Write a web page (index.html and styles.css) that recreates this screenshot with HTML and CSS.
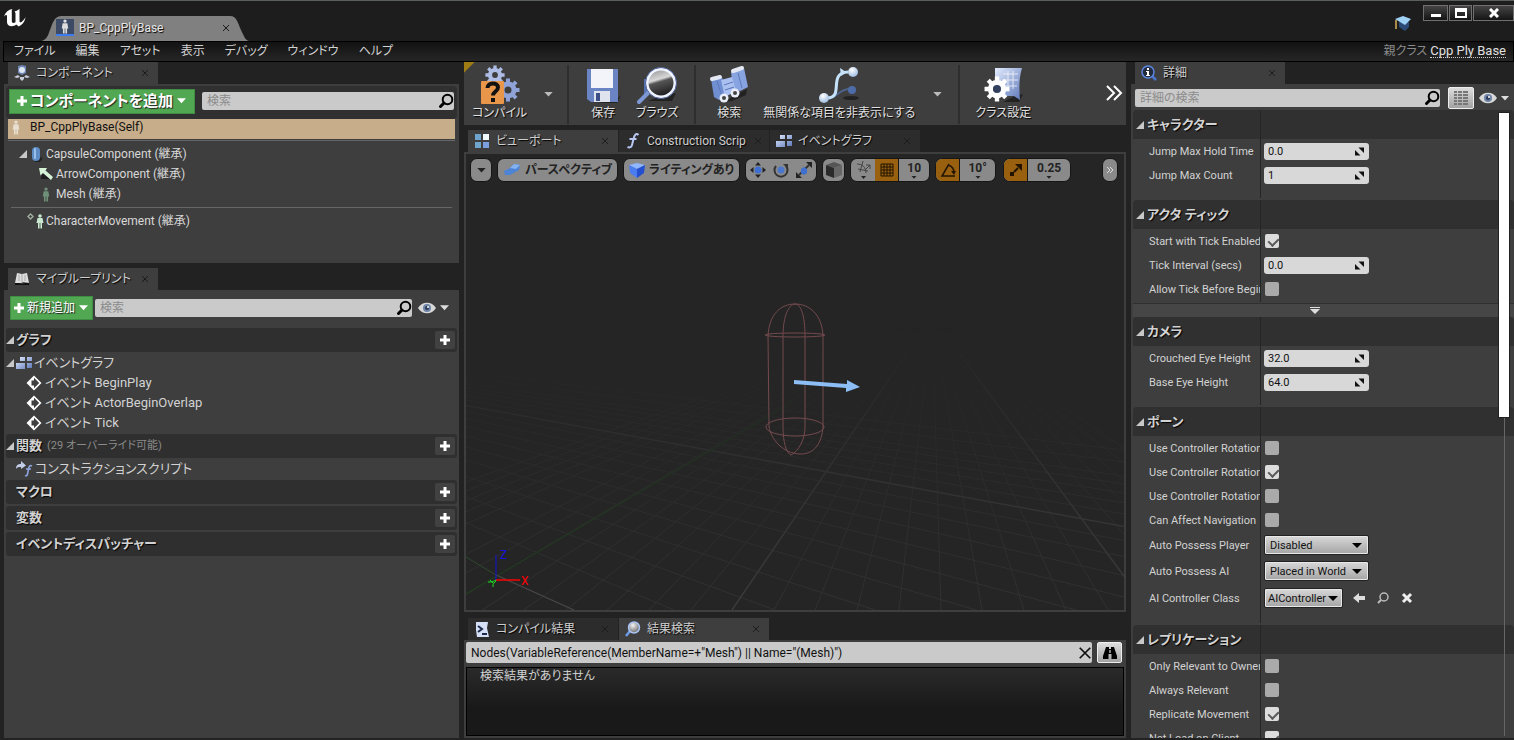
FILE: index.html
```html
<!DOCTYPE html>
<html lang="ja">
  <head>
    <meta charset="UTF-8" />
    <meta name="viewport" content="width=device-width, initial-scale=1.0" />
    <title>BP_CppPlyBase</title>
    <link rel="stylesheet" href="styles.css">
  </head>
  <body>
    <!-- shared icons -->
    <svg class="defs" width="0" height="0" aria-hidden="true">
      <defs>
        <linearGradient id="steel" x1="0" y1="0" x2="1" y2="1">
          <stop offset="0" stop-color="#e4edff" />
          <stop offset="1" stop-color="#5b76b8" />
        </linearGradient>
        <radialGradient id="ball" cx="0.4" cy="0.3" r="0.8">
          <stop offset="0" stop-color="#ffffff" />
          <stop offset="1" stop-color="#8fb4dc" />
        </radialGradient>
        <linearGradient id="lens" x1="0" y1="0" x2="0.3" y2="1">
          <stop offset="0" stop-color="#8a8a8a" />
          <stop offset="0.45" stop-color="#d8d8d8" />
          <stop offset="0.55" stop-color="#555" />
          <stop offset="1" stop-color="#222" />
        </linearGradient>
        <radialGradient id="glass" cx="0.4" cy="0.3" r="0.8">
          <stop offset="0" stop-color="#f4f4f4" />
          <stop offset="1" stop-color="#555" />
        </radialGradient>
        <symbol id="i-search" viewBox="0 0 16 16">
          <circle cx="9.500" cy="6.500" r="4.800" fill="none" stroke="#000" stroke-width="2" />
          <path d="M6 10L2.500 13.500" stroke="#000" stroke-width="3" stroke-linecap="round" />
        </symbol>
        <symbol id="i-plus" viewBox="0 0 12 12">
          <path d="M4.500 1h3v3.500H11v3H7.500V11h-3V7.500H1v-3h3.500z" fill="#fff" />
        </symbol>
        <symbol id="i-down" viewBox="0 0 10 6">
          <path d="M0 0h10L5 5.500z" fill="currentColor" />
        </symbol>
        <symbol id="i-tri" viewBox="0 0 8 8">
          <path d="M8 0v8H0z" fill="#c8c8c8" />
        </symbol>
        <symbol id="i-x" viewBox="0 0 8 8">
          <path d="M1 1l6 6M7 1L1 7" stroke="currentColor" fill="none" />
        </symbol>
        <symbol id="i-eye" viewBox="0 0 18 12">
          <path d="M0 6C4-1 14-1 18 6 14 13 4 13 0 6z" fill="#d8d8d8" />
          <circle cx="9" cy="6" r="4" fill="#6d83a8" />
          <circle cx="9" cy="6" r="2" fill="#2c3a55" />
          <circle cx="10" cy="5" r="1" fill="#fff" />
        </symbol>
        <symbol id="i-graph" viewBox="0 0 16 14">
          <path d="M4 1h5v4H4zM11 1h5v4h-5zM0 7h9v6H0zM11 7h5v5h-5z" fill="url(#steel)" />
        </symbol>
        <symbol id="i-event" viewBox="0 0 16 16">
          <path d="M8 0.500L15.500 8 8 15.500 0.500 8z" fill="#fff" />
          <path d="M8 2.800L13.200 8 8 13.200V10.500H5.500V5.500H8z" fill="#3e3e3e" />
        </symbol>
        <symbol id="i-spin" viewBox="0 0 9 9">
          <path d="M3.500 0.500H9V6zM0 3v5.500h5.500z" fill="#111" />
        </symbol>
        <symbol id="i-man" viewBox="0 0 8 16">
          <circle cx="4" cy="2.200" r="1.800" fill="currentColor" />
          <path d="M1.500 4.500h5l1 5.500H6.200V15.500H4.400V10h-.8v5.500H1.800V10H0.500z" fill="currentColor" />
        </symbol>
        <symbol id="i-gear" viewBox="0 0 24 24">
          <circle cx="12" cy="12" r="6" fill="none" stroke="currentColor" stroke-width="5" />
          <path d="M12 0.500v5M12 18.500v5M0.500 12h5M18.500 12h5M3.900 3.900l3.500 3.500M16.600 16.600l3.500 3.500M20.100 3.900l-3.500 3.500M7.400 16.600l-3.500 3.500" stroke="currentColor" stroke-width="4" />
        </symbol>
      </defs>
    </svg>

    <header class="titlebar">
      <svg class="logo" viewBox="0 0 22 20">
        <path d="M0 8.500C1.500 4 4.500 1.500 8.500 1 7.500 2 7.800 3 7.800 4.500V13c0 2 1.500 2.600 3.700 1.200V5L10.500 3.500C12.500 3 14 2.200 15.500 0.800V13c0 1.800 1.600 2 3 0 1.300-1 2.200-2.200 3-4-0.500 5-3.500 7.500-6.700 9.500l-2.600-2c-2.200 2.200-9 3-9.200-2.300V8C2.800 6.200 1.200 7 0 8.500z" fill="#fff" />
      </svg>
      <div class="doc-tab">
        <svg class="doc-shape" viewBox="0 0 208 25" preserveAspectRatio="none">
          <path d="M0 25C6 24 7 19 9 14S13 0 20 0h169c7 0 8 8 11 14s4 10 8 11z" fill="#808080" />
        </svg>
        <span class="doc-icon"><svg width="8" height="15"><use href="#i-man" /></svg></span>
        <span class="doc-name">BP_CppPlyBase</span>
        <button class="close" aria-label="閉じる"><svg width="8" height="8"><use href="#i-x" /></svg></button>
      </div>
      <svg class="cap" viewBox="0 0 18 18">
        <path d="M5 8v5l6 4 4-4V8z" fill="#2c4a78" />
        <path d="M1 5l8-3 8 3-6 6z" fill="#9fd0f5" />
        <path d="M2 6v9" stroke="#d9b25a" stroke-width="1.500" />
      </svg>
      <div class="win-buttons">
        <button aria-label="最小化"><svg width="10" height="10"><path d="M0 6h10v3H0z" fill="#fff" /></svg></button>
        <button class="win-max" aria-label="最大化"><svg width="12" height="10"><path d="M1 1h10v8H1z" fill="none" stroke="#fff" stroke-width="2" /><path d="M0 1h12v3H0z" fill="#fff" /></svg></button>
        <button class="win-close" aria-label="終了"><svg width="10" height="10"><path d="M1 1l8 8M9 1L1 9" stroke="#fff" stroke-width="3" /></svg></button>
      </div>
    </header>

    <nav class="menubar">
      <button>ファイル</button>
      <button>編集</button>
      <button>アセット</button>
      <button>表示</button>
      <button>デバッグ</button>
      <button>ウィンドウ</button>
      <button>ヘルプ</button>
      <p class="parent">親クラス <a href="#">Cpp Ply Base</a></p>
    </nav>

    <main class="workspace">
      <div class="left">
        <section class="dock components">
          <div class="tabs">
            <div class="tab active">
              <svg width="16" height="16" viewBox="0 0 16 16"><path d="M4 1l4-1 4 1v7l-4 2-4-2z" fill="#6f87b5" /><circle cx="8" cy="5" r="3" fill="#dfe6f4" /><path d="M0 12l4-2 2 2-3 1zM16 12l-4-2-2 2 3 1zM6 12h4v2l-2 2-2-2z" fill="#c6ccd8" /></svg>
              <span>コンポーネント</span>
              <button class="close" aria-label="閉じる"><svg width="8" height="8"><use href="#i-x" /></svg></button>
            </div>
          </div>
          <div class="panel">
            <div class="comp-bar">
              <button class="green big"><svg width="12" height="12"><use href="#i-plus" /></svg>コンポーネントを追加<svg width="9" height="6"><use href="#i-down" /></svg></button>
              <label class="search"><input type="text" placeholder="検索" aria-label="検索" /><svg width="16" height="16"><use href="#i-search" /></svg></label>
            </div>
            <ul class="tree">
              <li class="selected"><svg class="pawn" width="8" height="15"><use href="#i-man" /></svg>BP_CppPlyBase(Self)</li>
              <li class="rule"></li>
              <li class="lv1"><svg class="tri" width="8" height="8"><use href="#i-tri" /></svg><svg width="16" height="16" viewBox="0 0 16 16"><path d="M5 14l8-3v3l-3 2H6z" fill="#222" /><rect x="3" y="1" width="8" height="14" rx="4" fill="#5d8dc4" /><rect x="5" y="2" width="2" height="11" rx="1" fill="#98c0e8" /></svg>CapsuleComponent (継承)</li>
              <li class="lv2"><svg width="16" height="16" viewBox="0 0 16 16"><path d="M3 13h9L4 7z" fill="#1d1d1d" /><path d="M1 2h8L7.500 4.500 15 11l-2 3L5 7 2.500 9.500z" fill="#d6f3d8" /></svg>ArrowComponent (継承)</li>
              <li class="lv2 mesh"><svg width="16" height="15"><use href="#i-man" /></svg>Mesh (継承)</li>
              <li class="rule wide"></li>
              <li class="move"><svg width="18" height="16" viewBox="0 0 18 16"><path d="M3.500 1l2.500 2.500L3.500 6 1 3.500z" fill="none" stroke="#9fae9f" stroke-width="1.400" /><circle cx="13" cy="3" r="1.800" fill="#c9e6cf" /><path d="M10.500 5h5l1 5h-1.500v5.500h-1.600V10h-.8v5.500H11V10H9.500z" fill="#c9e6cf" /></svg>CharacterMovement (継承)</li>
            </ul>
          </div>
        </section>

        <section class="dock blueprint">
          <div class="tabs">
            <div class="tab active">
              <svg width="16" height="14" viewBox="0 0 16 14"><path d="M1 10l7 2 7-2v3H1z" fill="#111" /><path d="M3 1l5 1 5-1 2 10-6-1-2 1-6 0z" fill="#ddd" /><path d="M8 2v9M5 3v6M11 3v6" stroke="#aaa" /></svg>
              <span>マイブループリント</span>
              <button class="close" aria-label="閉じる"><svg width="8" height="8"><use href="#i-x" /></svg></button>
            </div>
          </div>
          <div class="panel">
            <div class="bp-bar">
              <button class="green"><svg width="12" height="12"><use href="#i-plus" /></svg>新規追加<svg width="9" height="6"><use href="#i-down" /></svg></button>
              <label class="search"><input type="text" placeholder="検索" aria-label="検索" /><svg width="16" height="16"><use href="#i-search" /></svg></label>
              <button class="view" aria-label="表示オプション"><svg width="18" height="12"><use href="#i-eye" /></svg><svg width="9" height="6"><use href="#i-down" /></svg></button>
            </div>
            <div class="category"><svg class="tri" width="8" height="8"><use href="#i-tri" /></svg><h2>グラフ</h2><button class="add" aria-label="追加"><svg width="12" height="12"><use href="#i-plus" /></svg></button></div>
            <ul class="members">
              <li class="graph"><svg class="tri" width="8" height="8"><use href="#i-tri" /></svg><svg width="16" height="14"><use href="#i-graph" /></svg>イベントグラフ</li>
              <li class="event"><svg width="16" height="16"><use href="#i-event" /></svg>イベント BeginPlay</li>
              <li class="event"><svg width="16" height="16"><use href="#i-event" /></svg>イベント ActorBeginOverlap</li>
              <li class="event"><svg width="16" height="16"><use href="#i-event" /></svg>イベント Tick</li>
            </ul>
            <div class="category"><svg class="tri" width="8" height="8"><use href="#i-tri" /></svg><h2>関数</h2><span class="hint">(29 オーバーライド可能)</span><button class="add" aria-label="追加"><svg width="12" height="12"><use href="#i-plus" /></svg></button></div>
            <ul class="members">
              <li class="func"><svg width="17" height="16" viewBox="0 0 17 16"><path d="M0 8C0 4 2 3 5 3V0l5 4.500L5 8V6C3 6 1 6 0 8z" fill="#c3cdea" /><path d="M16 5c-2-1-3 0-3.500 3l-1 5c-.4 2-1.500 2-2.500 1.500M10 8h5" fill="none" stroke="#8fa5e0" stroke-width="1.600" /></svg>コンストラクションスクリプト</li>
            </ul>
            <div class="category closed"><h2>マクロ</h2><button class="add" aria-label="追加"><svg width="12" height="12"><use href="#i-plus" /></svg></button></div>
            <div class="category closed"><h2>変数</h2><button class="add" aria-label="追加"><svg width="12" height="12"><use href="#i-plus" /></svg></button></div>
            <div class="category closed"><h2>イベントディスパッチャー</h2><button class="add" aria-label="追加"><svg width="12" height="12"><use href="#i-plus" /></svg></button></div>
          </div>
        </section>
      </div>

      <div class="center">
        <div class="toolbar">
          <div class="group first">
            <button class="tool">
              <svg width="40" height="40" viewBox="0 0 40 40">
                <g color="#aebde6"><use href="#i-gear" x="5" y="0" width="20" height="20" /></g>
                <g color="#8fa3d8"><use href="#i-gear" x="16" y="13" width="24" height="24" /></g>
                <rect x="1" y="16" width="23" height="23" rx="1" fill="#e8964a" />
                <path d="M7.500 23c0-6 10.500-6 10.500-.5 0 4-5 4-5 8" fill="none" stroke="#111" stroke-width="4" />
                <path d="M11 33h4v4h-4z" fill="#111" />
              </svg>
              コンパイル
            </button>
            <button class="more" aria-label="コンパイルオプション"><svg width="9" height="5"><use href="#i-down" /></svg></button>
          </div>
          <div class="group second">
            <button class="tool">
              <svg width="36" height="40" viewBox="0 0 36 40">
                <path d="M30 36l6-6-4 8H10z" fill="#222" />
                <path d="M2 4h31v33H6l-4-3z" fill="#6b84c4" />
                <path d="M6 4h22v19H6z" fill="#f2f4fa" />
                <path d="M9 26h16v11H9z" fill="#dfe3ee" />
                <path d="M11 28h4v8h-4z" fill="#3d4f86" />
              </svg>
              保存
            </button>
            <button class="tool">
              <svg width="42" height="40" viewBox="0 0 42 40">
                <path d="M12 36h24l4-8-12 2z" fill="#222" />
                <path d="M8 14h8v14l-8 2z" fill="#5570b0" />
                <path d="M14 26L3 37" stroke="#7d97d6" stroke-width="4" stroke-linecap="round" />
                <circle cx="25" cy="18" r="14" fill="url(#lens)" stroke="#f0f4ff" stroke-width="3" />
                <circle cx="25" cy="18" r="15.500" fill="none" stroke="#4b5f96" />
              </svg>
              ブラウズ
            </button>
          </div>
          <div class="group third">
            <button class="tool">
              <svg width="40" height="40" viewBox="0 0 40 40">
                <path d="M14 37l24-13-1 6-14 6z" fill="#222" />
                <path d="M2 14l11-2 6 18-9 5-5-3z" fill="#6f8fd2" />
                <path d="M22 7l13-4 4 19-8 4-7-3z" fill="#88a4e0" />
                <path d="M12 15l11-3 4 14-11 6z" fill="#a9c0f0" />
                <path d="M3 14l8-2M24 6l9-3" stroke="#e4e8f2" stroke-width="4" stroke-linecap="round" />
                <path d="M15 20l9-3M16 25l9-3M8 16l5 15M29 8l4 15" stroke="#5d78ba" />
                <circle cx="15" cy="33" r="4.500" fill="#e8edf8" /><circle cx="15" cy="33" r="2" fill="#444" />
                <circle cx="26" cy="28" r="4.500" fill="#e8edf8" /><circle cx="26" cy="28" r="2" fill="#444" />
              </svg>
              検索
            </button>
            <button class="tool">
              <svg width="42" height="40" viewBox="0 0 42 40">
                <ellipse cx="33" cy="33" rx="8" ry="2" fill="#222" />
                <path d="M6 32c14 4 12-8 26-8" fill="none" stroke="#4c6288" stroke-width="2" />
                <circle cx="34" cy="25" r="4" fill="#4e6ca8" />
                <path d="M9 33c18 0 0-25 21-26" fill="none" stroke="#c4e2fa" stroke-width="3" />
                <path d="M22 3l6 4-5 4z" fill="#c4e2fa" />
                <circle cx="35" cy="7" r="5" fill="url(#ball)" />
                <circle cx="6" cy="33" r="5" fill="url(#ball)" />
              </svg>
              無関係な項目を非表示にする
            </button>
            <button class="more" aria-label="非表示オプション"><svg width="9" height="5"><use href="#i-down" /></svg></button>
          </div>
          <div class="group fourth">
            <button class="tool">
              <svg width="40" height="40" viewBox="0 0 40 40">
                <path d="M20 37h16l4-8-8 2z" fill="#222" />
                <path d="M12 3h27c-3 10-3 20-2 32l-6-4H12z" fill="url(#steel)" />
                <path d="M20 9h15M20 15h15M20 21h14M25 6v18M30 6v18" stroke="#fff" opacity="0.700" />
                <g color="#fff"><use href="#i-gear" x="1" y="11" width="26" height="26" /></g>
                <circle cx="14" cy="24" r="4" fill="#33415f" />
              </svg>
              クラス設定
            </button>
          </div>
          <button class="overflow" aria-label="その他"><svg width="17" height="16" viewBox="0 0 17 16"><path d="M1 1l7 7-7 7M8 1l7 7-7 7" fill="none" stroke="#fff" stroke-width="2" /></svg></button>
        </div>

        <section class="dock view-dock">
          <div class="tabs">
            <div class="tab active">
              <svg width="16" height="14" viewBox="0 0 14 14"><path d="M0 0h6v6H0zM0 8h6v6H0z" fill="#6fa5cc" /><path d="M8 0h6v6H8z" fill="#f2fbff" /><path d="M8 8h6v6H8z" fill="#7c9fe0" /></svg>
              <span>ビューポート</span>
              <button class="close" aria-label="閉じる"><svg width="8" height="8"><use href="#i-x" /></svg></button>
            </div>
            <div class="tab">
              <svg width="16" height="16" viewBox="0 0 13 16"><path d="M12 2c-2-2-4-1-5 4L5.500 12c-.5 2-2 3-4.500 2M3 6h7" fill="none" stroke="#b8c6f2" stroke-width="2" /></svg>
              <span>Construction Scrip</span>
              <button class="close" aria-label="閉じる"><svg width="8" height="8"><use href="#i-x" /></svg></button>
            </div>
            <div class="tab">
              <svg width="16" height="14"><use href="#i-graph" /></svg>
              <span>イベントグラフ</span>
              <button class="close" aria-label="閉じる"><svg width="8" height="8"><use href="#i-x" /></svg></button>
            </div>
          </div>
          <div class="viewport">
            <svg class="scene" viewBox="0 0 659 456" preserveAspectRatio="xMinYMax slice">
              <defs>
                <linearGradient id="fade" x1="0" y1="0" x2="0" y2="1">
                  <stop offset="0.380" stop-color="#000" />
                  <stop offset="1" stop-color="#fff" />
                </linearGradient>
                <mask id="far" maskUnits="userSpaceOnUse" x="0" y="0" width="659" height="456"><rect width="659" height="456" fill="url(#fade)" /></mask>
              </defs>
              <g mask="url(#far)" fill="none" stroke="#323232">
                <path d="M466 162L-360 456M466 162L-318 456M466 162L-276 456M466 162L-234 456M466 162L-193 456M466 162L-109 456M466 162L-67 456M466 162L-26 456M466 162L16 456M466 162L58 456M466 162L100 456M466 162L141 456M466 162L183 456M466 162L225 456M466 162L308 456M466 162L349 456M466 162L391 456M466 162L433 456M466 162L475 456M466 162L516 456M466 162L558 456M466 162L600 456M466 162L642 456M466 162L725 456M466 162L767 456M466 162L808 456M466 162L850 456M466 162L892 456" />
                <path d="M-498 160L208 456M-498 160L309 456M-498 160L409 456M-498 160L510 456M-498 160L610 456M-498 160L711 456M-498 160L811 456M-498 160L912 456M-498 160L1012 456M-498 160L1213 456M-498 160L1314 456M-498 160L1414 456M-498 160L1515 456M-498 160L1615 456M-498 160L1816 456M-498 160L2016 456" />
                <path d="M466 162L266 456M466 162L683 456M-498 160L1113 456" stroke="#3c3c3c" stroke-width="1.500" />
                <path d="M0 440L327 248" stroke="#20401f" stroke-width="1.200" />
              </g>
              <path d="M0 403L30 421" stroke="#2d4a2e" />
              <path d="M30 421L108 456" stroke="#484848" stroke-width="1.200" />
              <g fill="none" stroke="#744a4e">
                <path d="M302 182C303 160 315 150 329 150s27 10 28 32v36L357 273M302 182l1 91" />
                <path d="M317 182c0-20 6-32 12-32s10 12 10 32v91c0 12-6 24-14 28-5-2-8-14-8-28z" />
                <path d="M303 273c2 12 14 27 32 27 14 0 21-12 22-27" />
                <ellipse cx="329" cy="181" rx="30" ry="2" />
                <ellipse cx="329" cy="273" rx="29" ry="9" />
              </g>
              <path d="M328 226l53 4v-4l13 7-14 5v-4l-52-4z" fill="#8cbef5" />
              <path d="M30 427v-26" stroke="#1414d8" />
              <path d="M30 426h24" stroke="#f00" stroke-width="1.500" />
              <path d="M22 428h4l4-2M24 426l4 4M30 427l-3 3v3" stroke="#1ee01e" fill="none" />
              <text x="34" y="405" fill="#1414d8">Z</text>
              <text x="55" y="431" fill="#f00">X</text>
            </svg>
            <div class="view-tools">
              <button class="pill arrow" aria-label="ビューポートオプション"><svg width="9" height="5"><use href="#i-down" /></svg></button>
              <button class="pill named"><svg width="18" height="14" viewBox="0 0 18 14"><path d="M1 8l6-3 4-4 6 1-1 5-9 5-5 0z" fill="#4d84d6" /><path d="M7 5l4-4 6 1-4 4z" fill="#84b2f0" /></svg>パースペクティブ</button>
              <button class="pill named"><svg width="16" height="16" viewBox="0 0 16 16"><path d="M0 3l8-2 8 2-8 4z" fill="#8fb6ff" /><path d="M0 3l8 4v9l-7-5z" fill="#4b7cf0" /><path d="M16 3L8 7v9l7-5z" fill="#2450cf" /></svg>ライティングあり</button>
              <div class="pill-group transform">
                <button class="seg" aria-label="移動"><svg width="16" height="16" viewBox="0 0 16 16"><circle cx="8" cy="8" r="3.500" fill="#3f6fd0" /><path d="M8 0l3 3.500H5zM8 16l3-3.500H5zM0 8l3.500-3v6zM16 8l-3.500-3v6z" fill="#222" /></svg></button>
                <button class="seg" aria-label="回転"><svg width="16" height="16" viewBox="0 0 16 16"><circle cx="8" cy="8" r="3.500" fill="#4a76cc" /><path d="M3 4a6.500 6.500 0 1 0 10 0" fill="none" stroke="#333" stroke-width="2" /><path d="M10 2h5v5z" fill="#333" /></svg></button>
                <button class="seg" aria-label="拡大縮小"><svg width="16" height="16" viewBox="0 0 16 16"><path d="M3 13L13 3" stroke="#333" stroke-width="2" /><path d="M5 7l3-2 3 2v4l-3 2-3-2z" fill="#3f6fd0" /><path d="M10 0h6v6zM0 10v6h6z" fill="#222" /></svg></button>
              </div>
              <button class="pill cube" aria-label="座標系"><svg width="16" height="16" viewBox="0 0 16 16"><path d="M0 3l8-3 8 3-8 3z" fill="#555" /><path d="M0 3l8 3v10l-8-3z" fill="#2a2a2a" /><path d="M16 3L8 6v10l8-3z" fill="#666" /></svg></button>
              <div class="pill-group">
                <button class="seg" aria-label="サーフェススナップ"><svg width="15" height="18" viewBox="0 0 15 18"><path d="M1 3c5 0 9 3 9 9M7 0L4 11M2 8l10 2M10 4h4v4M14 4l-5 5" fill="none" stroke="#444" /><path d="M5 15h5l-2.500 3z" fill="#222" /></svg></button>
                <button class="seg on" aria-label="グリッドスナップ"><svg width="14" height="14" viewBox="0 0 14 14"><path d="M1 1h12v12H1zM4 1v12M7 1v12M10 1v12M1 4h12M1 7h12M1 10h12" fill="none" stroke="#221400" /></svg></button>
                <button class="seg num">10<svg width="6" height="3"><use href="#i-down" /></svg></button>
              </div>
              <div class="pill-group">
                <button class="seg on" aria-label="角度スナップ"><svg width="16" height="14" viewBox="0 0 16 14"><path d="M9 1L2 13h13M8 2c4 1 6 4 6 8" fill="none" stroke="#221400" stroke-width="1.500" /><path d="M11 8h5l-2 4z" fill="#221400" /></svg></button>
                <button class="seg num deg">10°<svg width="6" height="3"><use href="#i-down" /></svg></button>
              </div>
              <div class="pill-group scale-snap">
                <button class="seg on" aria-label="スケールスナップ"><svg width="12" height="12" viewBox="0 0 12 12"><path d="M5 0h7v7zM0 8h4v4H0z" fill="#221400" /><path d="M4 8l4-4" stroke="#221400" stroke-width="2" /></svg></button>
                <button class="seg num scale">0.25<svg width="6" height="3"><use href="#i-down" /></svg></button>
              </div>
              <button class="pill end" aria-label="その他"><svg width="8" height="8" viewBox="0 0 8 8"><path d="M1 1l3 3-3 3M4 1l3 3-3 3" fill="none" stroke="#ddd" /></svg></button>
            </div>
          </div>
        </section>

        <section class="dock results">
          <div class="tabs">
            <div class="tab">
              <svg width="16" height="15" viewBox="0 0 14 15"><path d="M1 0h12l-1 6 2 9H2L1 8z" fill="#d5e0f6" /><path d="M3 4l4 3-4 3M7 12h5" fill="none" stroke="#1c2a4a" stroke-width="2" /></svg>
              <span>コンパイル結果</span>
              <button class="close" aria-label="閉じる"><svg width="8" height="8"><use href="#i-x" /></svg></button>
            </div>
            <div class="tab active">
              <svg width="16" height="16" viewBox="0 0 16 16"><path d="M5 10l-4 5" stroke="#6f9be6" stroke-width="2.500" /><circle cx="9" cy="6.500" r="5.500" fill="url(#glass)" stroke="#a9c4f4" stroke-width="1.500" /></svg>
              <span>結果検索</span>
              <button class="close" aria-label="閉じる"><svg width="8" height="8"><use href="#i-x" /></svg></button>
            </div>
          </div>
          <div class="panel">
            <div class="find-bar">
              <label class="search tall"><input type="text" value="Nodes(VariableReference(MemberName=+&quot;Mesh&quot;) || Name=&quot;(Mesh)&quot;)" aria-label="結果検索" /><svg width="14" height="14" viewBox="0 0 8 8"><path d="M1 1l6 6M7 1L1 7" stroke="#111" /></svg></label>
              <button class="light" aria-label="検索"><svg width="14" height="14" viewBox="0 0 14 14"><path d="M3 1h3v2h2V1h3l3 9v3H8.500V8h-3v5H0v-3z" fill="#000" /><path d="M6 4v3h2V4z" fill="#888" /></svg></button>
            </div>
            <div class="find-list"><p>検索結果がありません</p></div>
          </div>
        </section>
      </div>

      <section class="dock details">
        <div class="tabs">
          <div class="tab active">
            <svg width="16" height="16" viewBox="0 0 16 16"><path d="M11 11l4 4" stroke="#4b74d0" stroke-width="2.500" /><circle cx="7" cy="7" r="6" fill="#222a3c" stroke="#5b86e0" stroke-width="1.500" /><path d="M6 3h2v2H6zM5 6h3v4h1v1H5v-1h1V7H5z" fill="#fff" /></svg>
            <span>詳細</span>
            <button class="close" aria-label="閉じる"><svg width="8" height="8"><use href="#i-x" /></svg></button>
          </div>
        </div>
        <div class="panel">
          <div class="detail-bar">
            <label class="search"><input type="text" placeholder="詳細の検索" aria-label="詳細の検索" /><svg width="16" height="16"><use href="#i-search" /></svg></label>
            <button class="light matrix" aria-label="プロパティマトリックス"><svg width="14" height="14" viewBox="0 0 14 14"><path d="M0 1h3M4 1h4M9 1h5M0 4h3M4 4h4M9 4h5M0 7h3M4 7h4M9 7h5M0 10h3M4 10h4M9 10h5M0 13h3M4 13h4M9 13h5" stroke="#777" stroke-width="2" /></svg></button>
            <button class="view" aria-label="表示オプション"><svg width="18" height="12"><use href="#i-eye" /></svg><svg width="8" height="5"><use href="#i-down" /></svg></button>
          </div>
          <div class="props">
            <div class="prop-group">
              <h3><svg width="8" height="8"><use href="#i-tri" /></svg>キャラクター</h3>
              <div class="prop"><label for="hold">Jump Max Hold Time</label><span class="spin"><input id="hold" type="text" value="0.0" /><svg width="9" height="9"><use href="#i-spin" /></svg></span></div>
              <div class="prop"><label for="count">Jump Max Count</label><span class="spin"><input id="count" type="text" value="1" /><svg width="9" height="9"><use href="#i-spin" /></svg></span></div>
            </div>
            <div class="prop-group expandable">
              <h3><svg width="8" height="8"><use href="#i-tri" /></svg>アクタ ティック</h3>
              <div class="prop"><label for="tick">Start with Tick Enabled</label><input id="tick" type="checkbox" checked /></div>
              <div class="prop"><label for="interval">Tick Interval (secs)</label><span class="spin"><input id="interval" type="text" value="0.0" /><svg width="9" height="9"><use href="#i-spin" /></svg></span></div>
              <div class="prop"><label for="before">Allow Tick Before Begin</label><input id="before" type="checkbox" /></div>
            </div>
            <button class="expand" aria-label="詳細を表示"><svg width="10" height="8" viewBox="0 0 10 8"><path d="M0 0h10v1H0zM0 2h10L5 7z" fill="#ddd" /></svg></button>
            <div class="prop-group">
              <h3><svg width="8" height="8"><use href="#i-tri" /></svg>カメラ</h3>
              <div class="prop"><label for="crouch">Crouched Eye Height</label><span class="spin"><input id="crouch" type="text" value="32.0" /><svg width="9" height="9"><use href="#i-spin" /></svg></span></div>
              <div class="prop"><label for="base">Base Eye Height</label><span class="spin"><input id="base" type="text" value="64.0" /><svg width="9" height="9"><use href="#i-spin" /></svg></span></div>
            </div>
            <div class="prop-group">
              <h3><svg width="8" height="8"><use href="#i-tri" /></svg>ポーン</h3>
              <div class="prop"><label for="pitch">Use Controller Rotation</label><input id="pitch" type="checkbox" /></div>
              <div class="prop"><label for="yaw">Use Controller Rotation</label><input id="yaw" type="checkbox" checked /></div>
              <div class="prop"><label for="roll">Use Controller Rotation</label><input id="roll" type="checkbox" /></div>
              <div class="prop"><label for="nav">Can Affect Navigation</label><input id="nav" type="checkbox" /></div>
              <div class="prop mid"><label for="player">Auto Possess Player</label><span class="combo"><select id="player"><option>Disabled</option></select></span></div>
              <div class="prop mid"><label for="ai">Auto Possess AI</label><span class="combo"><select id="ai"><option>Placed in World</option></select></span></div>
              <div class="prop tall"><label for="aic">AI Controller Class</label><span class="combo short"><select id="aic"><option>AIController</option></select></span>
                <button class="mini" aria-label="使用"><svg width="12" height="12" viewBox="0 0 12 12"><path d="M0 6l6-5v3h6v4H6v3z" fill="#ddd" /></svg></button>
                <button class="mini" aria-label="参照"><svg width="12" height="12" viewBox="0 0 12 12"><circle cx="7" cy="5" r="4" fill="none" stroke="#bbb" stroke-width="1.500" /><path d="M4 8l-3 3" stroke="#bbb" stroke-width="2" /></svg></button>
                <button class="mini" aria-label="クリア"><svg width="12" height="12" viewBox="0 0 12 12"><path d="M2 2l8 8M10 2l-8 8" stroke="#eee" stroke-width="3" /></svg></button>
              </div>
            </div>
            <div class="prop-group">
              <h3><svg width="8" height="8"><use href="#i-tri" /></svg>レプリケーション</h3>
              <div class="prop"><label for="owner">Only Relevant to Owner</label><input id="owner" type="checkbox" /></div>
              <div class="prop"><label for="always">Always Relevant</label><input id="always" type="checkbox" /></div>
              <div class="prop"><label for="rep">Replicate Movement</label><input id="rep" type="checkbox" checked /></div>
              <div class="prop"><label for="netload">Net Load on Client</label><input id="netload" type="checkbox" checked /></div>
            </div>
            <div class="scrollbar"><div class="thumb"></div></div>
          </div>
        </div>
      </section>
    </main>
  </body>
</html>
```

FILE: styles.css
```css
* {
  margin: 0;
  padding: 0;
  box-sizing: border-box;
}

body {
  height: 100vh;
  display: flex;
  flex-direction: column;
  overflow: hidden;
  background: #222;
  color: #d2d2d2;
  font-family: Roboto, "Noto Sans CJK JP", sans-serif;
  font-size: 12px;
  line-height: 20px;
  font-feature-settings: "palt";
}

button,
input,
select {
  font: inherit;
  font-feature-settings: inherit;
  color: inherit;
  background: none;
  border: 0;
  outline: 0;
}

svg {
  display: block;
  flex: none;
}

ul {
  list-style: none;
}

.defs {
  position: absolute;
}

/* title bar */
.titlebar {
  position: relative;
  z-index: 0;
  height: 41px;
  flex: none;
  display: flex;
  align-items: flex-end;
  background: #1d1d1d;
  border-top: 1px solid #5a5e5e;
}

.logo {
  width: 22px;
  height: 20px;
  margin: 0 15px 13px 4px;
}

.doc-tab {
  position: relative;
  width: 208px;
  height: 25px;
  display: flex;
  align-items: center;
  padding: 0 17px 2px 15px;
}

.doc-shape {
  position: absolute;
  left: 0;
  top: 0;
  width: 100%;
  height: 100%;
  z-index: -1;
}

.doc-icon {
  width: 18px;
  height: 17px;
  display: flex;
  justify-content: center;
  background: #3c4a66;
  border-bottom: 2px solid #3d7cf0;
  color: #ddd;
  margin-right: 5px;
}

.doc-name {
  flex: 1;
  color: #e6e6e6;
  text-shadow: 1px 1px 1px #000;
}

.close {
  color: #1c1c1c;
  margin-left: auto;
  padding: 2px;
}

.cap {
  width: 18px;
  height: 18px;
  margin: 0 11px 9px auto;
}

.win-buttons {
  display: flex;
  gap: 1px;
  align-self: flex-start;
  margin-top: 4px;
}

.win-buttons button {
  width: 25px;
  height: 16px;
  display: flex;
  align-items: center;
  justify-content: center;
  border: 1px solid #707070;
  background: linear-gradient(#444, #151515);
}

.win-buttons .win-max {
  width: 23px;
}

.win-buttons .win-close {
  width: 41px;
}

/* menu */
.menubar {
  height: 21px;
  flex: none;
  display: flex;
  align-items: center;
  margin-left: 3px;
  padding: 0 7px 2px 0;
  border: 1px solid #000;
  background: linear-gradient(#121212, #262626);
}

.menubar button {
  padding: 0 10px;
  line-height: 16px;
}

.parent {
  margin-left: auto;
  color: #8a8a8a;
  line-height: 16px;
}

.parent a {
  display: inline-block;
  height: 16px;
  line-height: 17px;
  font-size: 13px;
  color: #e0e0e0;
  text-decoration: none;
  border-bottom: 1px dotted #ccc;
}

/* docks */
.workspace {
  flex: 1;
  min-height: 0;
  display: grid;
  grid-template-columns: minmax(0, 455fr) minmax(0, 662fr) minmax(0, 383fr);
  gap: 5px;
  padding: 0 0 2px 4px;
}

.left,
.center,
.dock {
  display: flex;
  flex-direction: column;
  min-height: 0;
  min-width: 0;
}

.tabs {
  display: flex;
  gap: 1px;
  flex: none;
  padding-left: 4px;
}

.tab {
  width: 150px;
  height: 22px;
  display: flex;
  align-items: center;
  gap: 6px;
  padding: 0 7px 0 6px;
  background: #2c2c2c;
  color: #cfcfcf;
  text-shadow: 1px 1px 1px #000;
  white-space: nowrap;
}

.tab.active {
  background: #3e3e3e;
}

.panel {
  flex: 1;
  min-height: 0;
  background: #3e3e3e;
}

/* shared controls */
.search {
  flex: 1;
  min-width: 0;
  height: 18px;
  display: flex;
  align-items: center;
  border-radius: 2px;
  background: #cacaca;
  color: #111;
}

.search input {
  flex: 1;
  min-width: 0;
  height: 18px;
  padding: 0 5px;
}

.search.tall {
  height: 21px;
}

.search ::placeholder {
  color: #8c8c8c;
  opacity: 1;
}

.green {
  height: 24px;
  display: flex;
  align-items: center;
  gap: 2px;
  padding: 0 4px 0 2px;
  border: 1px solid #3f8c43;
  background: #52a852;
  color: #fff;
  text-shadow: 1px 1px 1px #222;
  white-space: nowrap;
}

.green svg:last-child {
  margin-left: 2px;
}

.green.big {
  height: 25px;
  width: 186px;
  padding: 0 6px;
  font-size: 15px;
  font-weight: 700;
}

.view {
  display: flex;
  align-items: center;
  gap: 4px;
  color: #ddd;
}

.light {
  width: 25px;
  height: 21px;
  display: flex;
  align-items: center;
  justify-content: center;
  border: 1px solid #eee;
  border-radius: 2px;
  background: linear-gradient(#ddd, #a2a2a2);
}

/* components */
.components {
  height: 201px;
  flex: none;
}

.comp-bar {
  height: 33px;
  display: flex;
  align-items: center;
  gap: 7px;
  margin: 2px 2px 0;
  padding: 0 3px 3px;
  border-radius: 4px;
  background: #303030;
}

.tree {
  padding: 0 4px;
  color: #d8d8d8;
}

.tree li {
  height: 20px;
  display: flex;
  align-items: center;
  white-space: pre;
}

.tree .selected {
  background: #c8ad8a;
  color: #111;
  padding-bottom: 4px;
}

.pawn {
  color: #e8dfd2;
  margin: 0 10px 0 4px;
}

.tree .rule {
  height: 4px;
  border-top: 1px solid #666;
  margin-top: 1px;
}

.tree .rule.wide {
  margin: 3px 3px 0;
}

.tree .lv1 {
  padding-left: 11px;
}

.lv1 .tri {
  margin-right: 2px;
}

.lv1 svg + svg {
  margin-right: 1px;
}

.tree .lv2 {
  padding-left: 30px;
}

.lv2 svg {
  margin-right: 2px;
}

.mesh svg {
  color: #6f8f78;
}

.tree .move {
  padding-left: 19px;
}

.move svg {
  margin-right: 1px;
}

/* my blueprint */
.blueprint {
  flex: 1;
  margin-top: 5px;
}

.bp-bar {
  display: flex;
  align-items: center;
  gap: 2px;
  padding: 6px 10px 8px 6px;
}

.bp-bar .view {
  margin-left: 4px;
}

.category {
  height: 24px;
  display: flex;
  align-items: center;
  margin: 0 2px;
  padding-right: 2px;
  border-radius: 3px;
  background: #2f2f2f;
}

.category .tri {
  margin-right: 2px;
}

.category h2 {
  font-size: 13px;
  text-shadow: 1px 1px 1px #000;
}

.category.closed {
  margin-top: 2px;
  padding-left: 10px;
}

.hint {
  margin-left: 5px;
  font-size: 11px;
  color: #8a8a8a;
}

.add {
  width: 20px;
  height: 18px;
  display: flex;
  align-items: center;
  justify-content: center;
  margin-left: auto;
  border-radius: 2px;
  background: #414141;
}

.members {
  padding: 1px 2px;
  font-size: 13px;
}

.members + .category.closed {
  margin-top: 0;
}

.members li {
  height: 20px;
  display: flex;
  align-items: center;
  white-space: pre;
  gap: 3px;
}

.members .graph {
  gap: 2px;
}

.members .event {
  padding-left: 20px;
}

.members .func {
  padding-left: 10px;
  gap: 2px;
}

/* main toolbar */
.toolbar {
  height: 63px;
  flex: none;
  display: flex;
  align-items: stretch;
  background: linear-gradient(135deg, #a07c14 7px, #3e3e3e 8px);
}

.group {
  display: flex;
  gap: 4px;
  margin: 3px 0 1px;
  border-right: 2px solid #2e2e2e;
}

.first {
  gap: 0;
  padding-right: 6px;
}

.second {
  padding: 0 12px 0 9px;
}

.third {
  gap: 6px;
  padding: 0 8px;
}

.fourth {
  padding-left: 8px;
  border-right: 0;
}

.tool {
  min-width: 50px;
  display: flex;
  flex-direction: column;
  align-items: center;
  padding: 0 3px;
  white-space: nowrap;
  text-shadow: 1px 1px 1px #000;
  color: #e0e0e0;
}

.tool svg {
  margin-bottom: -2px;
}

.first .tool {
  padding: 0 8px;
}

.fourth .tool {
  min-width: 70px;
}

.more {
  width: 26px;
  display: flex;
  align-items: center;
  justify-content: center;
  color: #bbb;
}

.overflow {
  margin: 0 3px 2px auto;
}

/* viewport */
.view-dock {
  flex: 1;
  margin-top: 5px;
}

.viewport {
  flex: 1;
  min-height: 0;
  position: relative;
  border: 2px solid #3e3e3e;
  background: #252525;
}

.scene {
  width: 100%;
  height: 100%;
}

.scene text {
  font-size: 12px;
}

.view-tools {
  position: absolute;
  left: 4px;
  right: 6px;
  top: 4px;
  display: flex;
  gap: 5px;
  color: #222;
  font-weight: 700;
}

.pill,
.pill-group {
  height: 24px;
  display: flex;
  align-items: center;
  justify-content: center;
  border: 1px solid #161616;
  border-radius: 7px;
  background: #8a8a8a;
  overflow: hidden;
  white-space: nowrap;
}

.pill.arrow {
  width: 22px;
}

.pill.named {
  gap: 4px;
  padding: 0 5px;
}

.pill.cube {
  width: 23px;
}

.pill.end {
  width: 16px;
  margin-left: auto;
}

.seg {
  width: 24px;
  height: 22px;
  display: flex;
  align-items: center;
  justify-content: center;
}

.transform {
  width: 72px;
}

.seg.on {
  background: #98600f;
  border-right: 1px solid #161616;
}

.seg.num {
  width: 30px;
  flex-direction: column;
  line-height: 15px;
}

.seg.deg {
  width: 35px;
}

.seg.scale {
  width: 42px;
}

.scale-snap {
  margin-left: 2px;
}

/* find results */
.results {
  height: 120px;
  flex: none;
  margin-top: 6px;
}

.results .panel {
  display: flex;
  flex-direction: column;
  gap: 4px;
  padding: 2px;
}

.find-bar {
  display: flex;
  gap: 5px;
  padding-right: 2px;
}

.find-list {
  flex: 1;
  border: 1px solid #000;
  background: linear-gradient(#2a2a2a, #191919 60%);
}

.find-list p {
  padding-left: 13px;
  line-height: 16px;
}

/* details */
.details .panel {
  display: flex;
  flex-direction: column;
}

.detail-bar {
  height: 26px;
  flex: none;
  display: flex;
  align-items: center;
  padding: 2px 5px 0 4px;
}

.detail-bar .light {
  width: 26px;
  height: 22px;
  margin: 0 5px 0 8px;
}

.props {
  flex: 1;
  min-height: 0;
  overflow: hidden;
  position: relative;
  margin-left: 2px;
  font-size: 11px;
}

/* the dark line between names and values */
.prop-group {
  padding-bottom: 11px;
  margin-bottom: 2px;
  background: linear-gradient(#252525, #252525) 127px 0 / 1px 100% no-repeat;
}

.prop-group.expandable {
  padding-bottom: 1px;
  margin-bottom: 1px;
}

.prop-group h3 {
  height: 29px;
  display: flex;
  align-items: center;
  gap: 3px;
  padding-left: 3px;
  border-radius: 4px 4px 0 0;
  background: linear-gradient(#252525, #252525) 127px 0 / 1px 100% no-repeat #303030;
  font-size: 13px;
  text-shadow: 1px 1px 1px #000;
}

.prop {
  height: 24px;
  display: flex;
  align-items: center;
}

.prop.mid {
  height: 26px;
}

.prop.tall {
  height: 28px;
}

.prop label {
  width: 127px;
  flex: none;
  padding: 1px 0 0 16px;
  margin-right: 4px;
  overflow: hidden;
  white-space: nowrap;
}

.spin {
  width: 105px;
  height: 17px;
  display: flex;
  align-items: center;
  padding: 0 5px 0 4px;
  border-radius: 3px;
  background: #d8d8d8;
  color: #111;
}

.spin input {
  flex: 1;
  min-width: 0;
  height: 17px;
  padding-top: 1px;
}

.prop input[type="checkbox"] {
  appearance: none;
  position: relative;
  width: 14px;
  height: 14px;
  margin-left: 1px;
  border-radius: 2px;
  background: #aaa;
}

.prop input[type="checkbox"]:checked {
  background: #dcdcdc;
}

.prop input[type="checkbox"]:checked::after {
  content: "";
  position: absolute;
  left: 5px;
  top: 2px;
  width: 5px;
  height: 8px;
  border: solid #5a5a5a;
  border-width: 0 2px 2px 0;
  transform: rotate(45deg);
}

.combo {
  position: relative;
  width: 105px;
  margin-right: 8px;
}

.combo.short {
  width: 79px;
}

.combo select {
  appearance: none;
  display: block;
  width: 100%;
  height: 20px;
  padding-left: 5px;
  border: 1px solid #222;
  border-radius: 2px;
  box-shadow: inset 0 0 0 1px #e8e8e8;
  background: linear-gradient(#d8d8d8, #a4a4a4);
  color: #111;
}

.combo.short select {
  padding-left: 3px;
}

.combo::after {
  content: "";
  position: absolute;
  right: 7px;
  top: 8px;
  border: 5px solid transparent;
  border-top: 5px solid #000;
  border-bottom: 0;
  pointer-events: none;
}

.combo.short::after {
  right: 5px;
}

.mini {
  padding: 0 2px;
  margin-right: 8px;
}

.expand {
  width: 100%;
  height: 14px;
  display: flex;
  align-items: center;
  justify-content: center;
  padding-right: 17px;
  border-top: 1px solid #303030;
  background: #464646;
}

.scrollbar {
  position: absolute;
  right: 4px;
  top: 2px;
  bottom: 2px;
  width: 12px;
  background: linear-gradient(#666, #666) 6px 0 / 1px 100% no-repeat;
}

.thumb {
  height: 49%;
  border: 1px solid #222;
  background: #fff;
}
```
